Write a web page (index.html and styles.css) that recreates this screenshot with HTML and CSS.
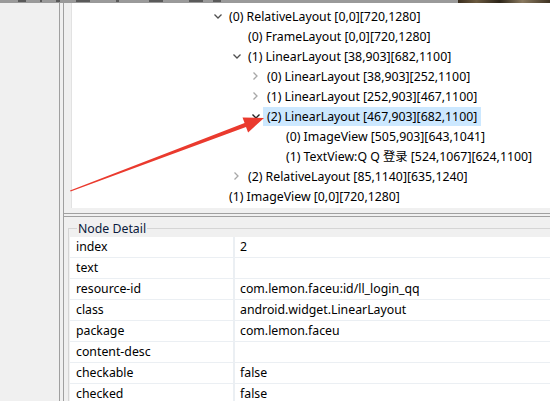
FILE: index.html
```html
<!DOCTYPE html>
<html lang="en">

<head>
    <meta charset="UTF-8">
    <meta name="viewport" content="width=device-width, initial-scale=1.0">
    <title>UI Automator Viewer</title>
    <link rel="stylesheet" href="styles.css">
</head>

<body>
    <div class="app">
        <div class="toolbar">
            <span class="tb-icon" style="width:8px;margin-left:18px"></span>
            <span class="tb-icon" style="width:2px;margin-left:14px"></span>
            <span class="tb-icon" style="width:4px;margin-left:14px"></span>
            <span class="tb-icon" style="width:14px;margin-left:16px"></span>
            <span class="tb-icon" style="width:3px;margin-left:26px"></span>
            <span class="tb-icon" style="width:14px;margin-left:30px"></span>
            <span class="tb-icon" style="width:14px;margin-left:26px"></span>
            <span class="tb-icon" style="width:8px;margin-left:10px"></span>
            <span class="photo"></span>
        </div>
        <div class="main">
            <div class="left-pane"></div>
            <div class="sash-v"></div>
            <div class="right-pane">
                <div class="tree-wrap">
                    <div class="tree">
                        <div class="node lv0"><span class="arrow"><svg width="8" height="5" viewBox="0 0 8 5"><polyline points="0.5,0.5 4,4 7.5,0.5" fill="none" stroke="#505050" stroke-width="1.3"/></svg></span><span class="label">(0) RelativeLayout [0,0][720,1280]</span></div>
                        <div class="node lv1"><span class="arrow"></span><span class="label">(0) FrameLayout [0,0][720,1280]</span></div>
                        <div class="node lv1"><span class="arrow"><svg width="8" height="5" viewBox="0 0 8 5"><polyline points="0.5,0.5 4,4 7.5,0.5" fill="none" stroke="#505050" stroke-width="1.3"/></svg></span><span class="label">(1) LinearLayout [38,903][682,1100]</span></div>
                        <div class="node lv2"><span class="arrow"><svg width="5" height="8" viewBox="0 0 5 8"><polyline points="0.5,0.5 4,4 0.5,7.5" fill="none" stroke="#a8a8a8" stroke-width="1.3"/></svg></span><span class="label">(0) LinearLayout [38,903][252,1100]</span></div>
                        <div class="node lv2"><span class="arrow"><svg width="5" height="8" viewBox="0 0 5 8"><polyline points="0.5,0.5 4,4 0.5,7.5" fill="none" stroke="#a8a8a8" stroke-width="1.3"/></svg></span><span class="label">(1) LinearLayout [252,903][467,1100]</span></div>
                        <div class="node lv2"><span class="arrow"><svg width="8" height="5" viewBox="0 0 8 5"><polyline points="0.5,0.5 4,4 7.5,0.5" fill="none" stroke="#222" stroke-width="1.4"/></svg></span><span class="label selected">(2) LinearLayout [467,903][682,1100]</span></div>
                        <div class="node lv3"><span class="arrow"></span><span class="label">(0) ImageView [505,903][643,1041]</span></div>
                        <div class="node lv3"><span class="arrow"></span><span class="label">(1) TextView:Q Q 登录 [524,1067][624,1100]</span></div>
                        <div class="node lv1"><span class="arrow"><svg width="5" height="8" viewBox="0 0 5 8"><polyline points="0.5,0.5 4,4 0.5,7.5" fill="none" stroke="#a8a8a8" stroke-width="1.3"/></svg></span><span class="label">(2) RelativeLayout [85,1140][635,1240]</span></div>
                        <div class="node lv0"><span class="arrow"></span><span class="label">(1) ImageView [0,0][720,1280]</span></div>
                    </div>
                </div>
                <div class="sash-h"></div>
                <div class="detail">
                    <div class="group-head"><span class="group-title">Node Detail</span></div>
                    <div class="group-body">
                        <div class="row"><div class="key">index</div><div class="val">2</div></div>
                        <div class="row"><div class="key">text</div><div class="val"></div></div>
                        <div class="row"><div class="key">resource-id</div><div class="val">com.lemon.faceu:id/ll_login_qq</div></div>
                        <div class="row"><div class="key">class</div><div class="val">android.widget.LinearLayout</div></div>
                        <div class="row"><div class="key">package</div><div class="val">com.lemon.faceu</div></div>
                        <div class="row"><div class="key">content-desc</div><div class="val"></div></div>
                        <div class="row"><div class="key">checkable</div><div class="val">false</div></div>
                        <div class="row"><div class="key">checked</div><div class="val">false</div></div>
                    </div>
                </div>
            </div>
        </div>
        <!-- red annotation arrow drawn over the screenshot -->
        <svg class="annot" width="550" height="401" viewBox="0 0 550 401">
            <polygon points="70,190.5 244.6,123.1 242.5,117.5 264,118 248.1,132.5 246,126.9 70.6,191.6" fill="#ea3a2e"/>
        </svg>
    </div>
</body>

</html>
```

FILE: styles.css
```css
body {
    margin: 0px;
    padding: 0px;
    font-family: "Noto Sans", "Noto Sans CJK SC", sans-serif;
    font-size: 12.3px;
    color: #000;
}

.app {
    position: relative;
    width: 550px;
    height: 401px;
    overflow: hidden;
    background-color: #f0f0f0;
    display: flex;
    flex-direction: column;
}

.toolbar {
    height: 3px;
    background-color: #9a9a9a;
    display: flex;
    flex-shrink: 0;
}

.tb-icon {
    height: 2px;
    background-color: #5a5a5a;
}

.photo {
    margin-left: auto;
    width: 92px;
    background: linear-gradient(90deg, #3a2e1e, #6b5a40 20%, #2c2418 45%, #8a7a60 70%, #3e3222);
}

.main {
    flex: 1;
    display: flex;
}

.left-pane {
    width: 59px;
    background-color: #f0f0f0;
}

.sash-v {
    width: 3px;
    border-left: 1px solid #a0a0a0;
    border-right: 1px solid #a0a0a0;
}

.right-pane {
    flex: 1;
    display: flex;
    flex-direction: column;
}

.tree-wrap {
    padding-left: 7px;
}

.tree {
    height: 202px;
    padding-top: 3px;
    background-color: #fff;
    border-left: 1px solid #e2e2e2;
}

.node {
    height: 20px;
    display: flex;
    align-items: center;
    white-space: nowrap;
}

.lv0 { margin-left: 138px; }
.lv1 { margin-left: 157px; }
.lv2 { margin-left: 176px; }
.lv3 { margin-left: 195px; }

.arrow {
    width: 15px;
    height: 20px;
    display: flex;
    align-items: center;
    justify-content: center;
    flex-shrink: 0;
}

.label {
    padding: 0px 4px;
    line-height: 19px;
}

.label.selected {
    background-color: #cce8ff;
}

.sash-h {
    margin-top: 5px;
    height: 2px;
    border-top: 1px solid #a0a0a0;
    border-bottom: 1px solid #a0a0a0;
}

.detail {
    flex: 1;
    padding-left: 4px;
    padding-top: 3px;
}

.group-head {
    height: 17px;
    display: flex;
}

.group-head::before {
    content: "";
    width: 8px;
    height: 8px;
    align-self: flex-end;
    border-top: 1px solid #d5d5d5;
    border-left: 1px solid #d5d5d5;
}

.group-head::after {
    content: "";
    flex: 1;
    height: 8px;
    align-self: flex-end;
    border-top: 1px solid #d5d5d5;
}

.group-title {
    padding: 0px 1px;
    line-height: 17px;
    color: #0a1a3c;
}

.group-body {
    border-left: 1px solid #d5d5d5;
    padding-left: 1px;
}

.row {
    display: flex;
    height: 20px;
    border-bottom: 1px solid #ebeff3;
    background-color: #fff;
}

.key {
    width: 157px;
    padding-left: 6px;
    line-height: 20px;
    border-right: 2px solid #ebeff3;
}

.val {
    flex: 1;
    padding-left: 5px;
    line-height: 20px;
    white-space: nowrap;
}

.annot {
    position: absolute;
    top: 0px;
    left: 0px;
    pointer-events: none;
}
```
